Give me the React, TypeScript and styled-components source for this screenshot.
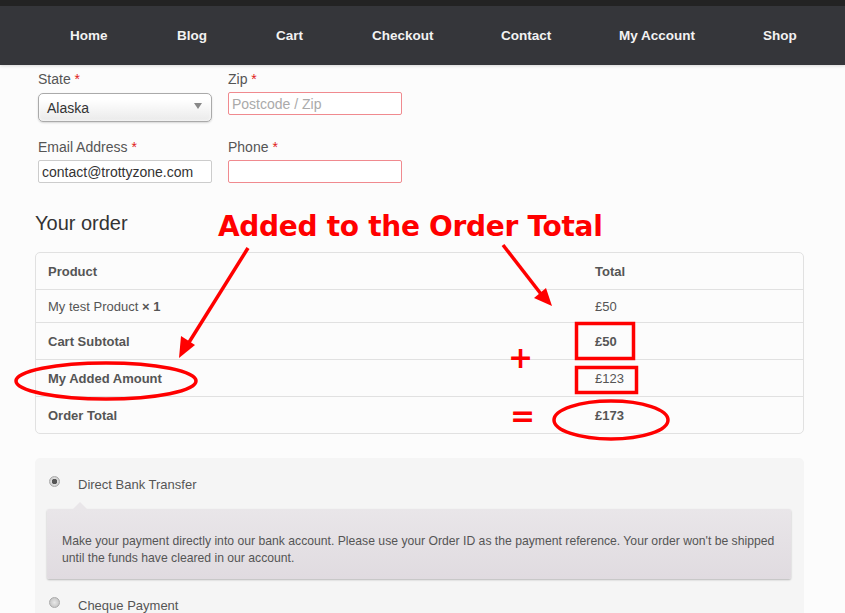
import React from 'react';
import styled, { createGlobalStyle } from 'styled-components';

const GlobalStyle = createGlobalStyle`
  html, body {
    margin: 0;
    padding: 0;
    background: #fcfcfc;
    font-family: 'Liberation Sans', Arial, sans-serif;
    color: #555;
  }
`;

const navItems = ['Home', 'Blog', 'Cart', 'Checkout', 'Contact', 'My Account', 'Shop'];
const navWidths = [107, 99, 96, 129, 118, 144, 60];

const Page = styled.div`
  position: relative;
  width: 845px;
  height: 613px;
  overflow: hidden;
`;

const NavBar = styled.nav`
  height: 59px;
  border-top: 6px solid #232323;
  background: #35363a;
  box-shadow: 0 1px 3px rgba(0, 0, 0, 0.15);
  display: flex;
  align-items: center;
  padding-left: 70px;
`;

const NavLink = styled.a<{ $w: number }>`
  width: ${p => p.$w}px;
  color: #f2f2f2;
  font-size: 13.5px;
  font-weight: bold;
  text-decoration: none;
  flex-shrink: 0;
`;

const Content = styled.div`
  padding: 0 41px 0 35px;
`;

const FormRow = styled.div<{ $top: number }>`
  display: flex;
  gap: 16px;
  padding-left: 3px;
  margin-top: ${p => p.$top}px;
`;

const Field = styled.div`
  width: 174px;
  display: flex;
  flex-direction: column;
`;

const Label = styled.label`
  font-size: 14px;
  line-height: 18px;
  color: #555;
  margin-bottom: 4px;
`;

const Req = styled.span`
  color: #e02020;
`;

const SelectBox = styled.div`
  height: 27px;
  margin-top: 1px;
  border: 1px solid #aaa;
  border-radius: 5px;
  background: linear-gradient(#ffffff 20%, #eaeaea);
  box-shadow: 0 1px 2px rgba(0, 0, 0, 0.15), inset 0 0 3px #fff;
  display: flex;
  align-items: center;
  justify-content: space-between;
  padding: 0 9px 0 8px;
  font-size: 14px;
  color: #333;
`;

const Caret = styled.span`
  width: 0;
  height: 0;
  border-left: 4px solid transparent;
  border-right: 4px solid transparent;
  border-top: 6px solid #888;
  margin-top: -3px;
`;

const TextInput = styled.div<{ $invalid?: boolean; $placeholder?: boolean }>`
  height: 21px;
  border: 1px solid ${p => (p.$invalid ? '#f08a8f' : '#ccc')};
  border-radius: 2px;
  background: #fff;
  display: flex;
  align-items: center;
  padding: 0 3px;
  font-size: 14px;
  color: ${p => (p.$placeholder ? '#aaa' : '#333')};
`;

const Heading = styled.h3`
  margin: 27px 0 16px;
  font-size: 20px;
  line-height: 26px;
  font-weight: normal;
  color: #333;
`;

const OrderTable = styled.table`
  width: 769px;
  table-layout: fixed;
  border-collapse: separate;
  border-spacing: 0;
  border: 1px solid #e1e1e1;
  border-radius: 5px;
  font-size: 13px;
  color: #555;
`;

const Cell = styled.td<{ $bold?: boolean; $h: number; $first?: boolean }>`
  height: ${p => p.$h}px;
  padding: 0 0 0 12px;
  border-top: ${p => (p.$first ? 'none' : '1px solid #e1e1e1')};
  font-weight: ${p => (p.$bold ? 'bold' : 'normal')};
  text-align: left;
  vertical-align: middle;
  white-space: nowrap;
  &:first-child {
    width: 535px;
  }
`;

const Qty = styled.strong`
  font-weight: bold;
`;

const PaymentPanel = styled.div`
  margin-top: 24px;
  width: 769px;
  height: 180px;
  background: #f5f5f5;
  border-radius: 5px;
  padding: 13px 12px 0;
  box-sizing: border-box;
`;

const MethodRow = styled.div`
  display: flex;
  align-items: center;
  height: 26px;
  font-size: 13px;
  color: #555;
`;

const Radio = styled.span<{ $checked?: boolean }>`
  width: 11px;
  height: 11px;
  border-radius: 50%;
  margin: -5px 18px 0 2px;
  background: radial-gradient(circle, ${p => (p.$checked ? '#555 0 2.5px, #ddd 3px' : '#e8e8e8 0')}, #bbb 100%);
  border: 1px solid #aaa;
  box-sizing: border-box;
  flex-shrink: 0;
`;

const Description = styled.div`
  position: relative;
  margin: 12px 0 13px;
  width: 744px;
  height: 70px;
  box-sizing: border-box;
  background: linear-gradient(#e9e6e9, #e0dbe0);
  border-radius: 2px;
  box-shadow: 0 1px 2px rgba(0, 0, 0, 0.25);
  padding: 24px 15px 0;
  font-size: 12.2px;
  line-height: 17px;
  color: #555;
  &::before {
    content: '';
    position: absolute;
    top: -7px;
    left: 26px;
    border-left: 7px solid transparent;
    border-right: 7px solid transparent;
    border-bottom: 7px solid #e9e6e9;
  }
`;

const Overlay = styled.svg`
  position: absolute;
  left: 0;
  top: 0;
  pointer-events: none;
`;

const Callout = styled.div`
  position: absolute;
  left: 218px;
  top: 213px;
  font-family: 'DejaVu Sans', Verdana, sans-serif;
  font-weight: bold;
  font-size: 28px;
  line-height: 28px;
  letter-spacing: -0.3px;
  color: #f00;
  white-space: nowrap;
`;

const Sign = styled.div<{ $x: number; $y: number }>`
  position: absolute;
  left: ${p => p.$x}px;
  top: ${p => p.$y}px;
  font-family: 'DejaVu Sans', Verdana, sans-serif;
  font-weight: bold;
  font-size: 30px;
  line-height: 30px;
  color: #f00;
`;

const rows = [
  { label: 'My test Product', qty: true, value: '£50', bold: false, vbold: false, h: 32 },
  { label: 'Cart Subtotal', value: '£50', bold: true, vbold: true, h: 36 },
  { label: 'My Added Amount', value: '£123', bold: true, vbold: false, h: 36 },
  { label: 'Order Total', value: '£173', bold: true, vbold: true, h: 36 },
];

export default function App() {
  return (
    <Page>
      <GlobalStyle />
      <NavBar>
        {navItems.map((item, i) => (
          <NavLink key={item} $w={navWidths[i]} href="#">
            {item}
          </NavLink>
        ))}
      </NavBar>
      <Content>
        <FormRow $top={5}>
          <Field>
            <Label>
              State <Req>*</Req>
            </Label>
            <SelectBox>
              Alaska
              <Caret />
            </SelectBox>
          </Field>
          <Field>
            <Label>
              Zip <Req>*</Req>
            </Label>
            <TextInput $invalid $placeholder>
              Postcode / Zip
            </TextInput>
          </Field>
        </FormRow>
        <FormRow $top={16}>
          <Field>
            <Label>
              Email Address <Req>*</Req>
            </Label>
            <TextInput>contact@trottyzone.com</TextInput>
          </Field>
          <Field>
            <Label>
              Phone <Req>*</Req>
            </Label>
            <TextInput $invalid />
          </Field>
        </FormRow>
        <Heading>Your order</Heading>
        <OrderTable>
          <thead>
            <tr>
              <Cell as="th" $bold $h={36} $first>
                Product
              </Cell>
              <Cell as="th" $bold $h={36} $first>
                Total
              </Cell>
            </tr>
          </thead>
          <tbody>
            {rows.map(r => (
              <tr key={r.label}>
                <Cell $bold={r.bold} $h={r.h}>
                  {r.label}
                  {r.qty && <Qty> × 1</Qty>}
                </Cell>
                <Cell $bold={r.vbold} $h={r.h}>
                  {r.value}
                </Cell>
              </tr>
            ))}
          </tbody>
        </OrderTable>
        <PaymentPanel>
          <MethodRow>
            <Radio $checked />
            Direct Bank Transfer
          </MethodRow>
          <Description>
            Make your payment directly into our bank account. Please use your Order ID as the payment reference. Your
            order won't be shipped until the funds have cleared in our account.
          </Description>
          <MethodRow>
            <Radio />
            Cheque Payment
          </MethodRow>
        </PaymentPanel>
      </Content>

      <Callout>Added to the Order Total</Callout>
      <Sign $x={508} $y={343}>+</Sign>
      <Sign $x={510} $y={401}>=</Sign>
      <Overlay width="845" height="613" viewBox="0 0 845 613">
        <g stroke="#f00" strokeWidth="3.5" fill="none">
          <line x1="248" y1="248" x2="188" y2="344" />
          <line x1="503" y1="245" x2="541" y2="294" />
          <ellipse cx="106" cy="381" rx="90" ry="18" />
          <ellipse cx="611" cy="420" rx="57" ry="19" />
          <rect x="576.5" y="323.5" width="57" height="35" />
          <rect x="576.5" y="367.5" width="60" height="25" />
        </g>
        <g fill="#f00">
          <polygon points="179,358 181,336 195,345" />
          <polygon points="552,306 534,298 546,288" />
        </g>
      </Overlay>
    </Page>
  );
}
